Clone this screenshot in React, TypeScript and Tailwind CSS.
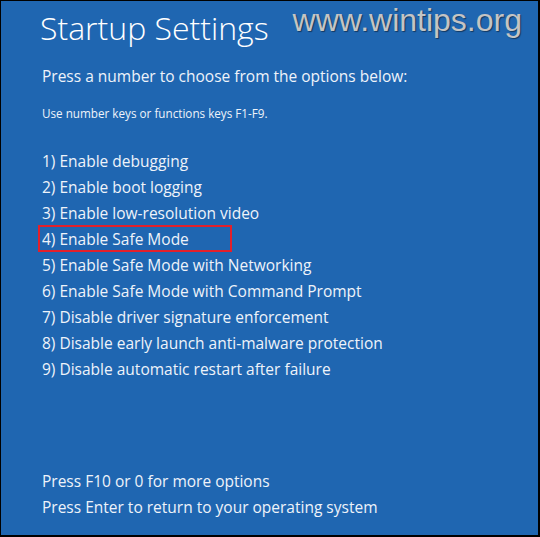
const options = [
  '1) Enable debugging',
  '2) Enable boot logging',
  '3) Enable low-resolution video',
  '4) Enable Safe Mode',
  '5) Enable Safe Mode with Networking',
  '6) Enable Safe Mode with Command Prompt',
  '7) Disable driver signature enforcement',
  '8) Disable early launch anti-malware protection',
  '9) Disable automatic restart after failure',
]

export default function App() {
  return (
    <div className="w-[540px] h-[537px] bg-black pt-px pl-px pr-[2px] pb-[2px]">
      <div
        className="relative h-full w-full bg-[#1f66b1] text-[#eef3fa] flex flex-col pl-[41px]"
        style={{ fontFamily: '"Open Sans", "Noto Sans", sans-serif' }}
      >
        {/* watermark */}
        <div
          className="absolute right-[16px] top-[1px] text-[32px] leading-[36px] text-[#c4c4c4] [text-shadow:1px_1px_1px_rgba(0,0,0,0.45)]"
          style={{ fontFamily: '"Liberation Sans", Arial, sans-serif' }}
        >
          www.wintips.org
        </div>

        <h1 className="mt-[7px] -ml-[2px] text-[32px] leading-[40px] font-light text-white">Startup Settings</h1>

        <p className="mt-[17px] text-[15.5px] leading-[22px]">
          Press a number to choose from the options below:
        </p>
        <p className="mt-[17px] text-[11.7px] leading-[18px]">
          Use number keys or functions keys F1-F9.
        </p>

        <ul className="mt-[26px] flex flex-col">
          {options.map((o, i) => (
            <li key={o} className="relative text-[15.5px] leading-[26px]">
              {o}
              {i === 3 && (
                <span className="absolute left-[-4px] top-[-1px] w-[194px] h-[27px] border-2 border-[#e3202b]" />
              )}
            </li>
          ))}
        </ul>

        <div className="mt-auto mb-[15px] flex flex-col">
          <p className="text-[15.5px] leading-[26px]">Press F10 or 0 for more options</p>
          <p className="text-[15.5px] leading-[26px]">Press Enter to return to your operating system</p>
        </div>
      </div>
    </div>
  )
}
